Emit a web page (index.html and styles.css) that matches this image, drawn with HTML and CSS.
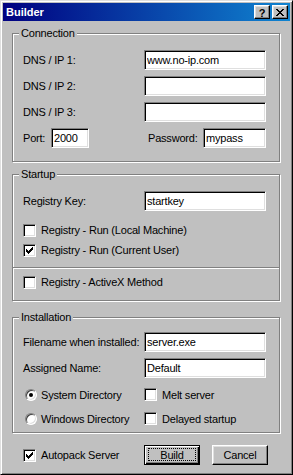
FILE: index.html
```html
<!DOCTYPE html>
<html lang="en">
<head>
    <meta charset="UTF-8">
    <title>Builder</title>
    <link rel="stylesheet" href="styles.css">
</head>
<body>
    <div class="window">
        <div class="titlebar">
            <span class="title">Builder</span>
            <span class="tbtn help">?</span>
            <span class="tbtn close">
                <svg width="8" height="7" viewBox="0 0 8 7" shape-rendering="crispEdges"><path d="M0 0h2v1H0zM6 0h2v1H6zM1 1h2v1H1zM5 1h2v1H5zM2 2h4v1H2zM3 3h2v1H3zM2 4h4v1H2zM1 5h2v1H1zM5 5h2v1H5zM0 6h2v1H0zM6 6h2v1H6z" fill="#000"/></svg>
            </span>
        </div>

        <div class="content">
            <!-- Connection -->
            <div class="group connection">
                <span class="group-title">Connection</span>
                <div class="field"><label>DNS / IP 1:</label><input class="edit" value="www.no-ip.com"></div>
                <div class="field"><label>DNS / IP 2:</label><input class="edit" value=""></div>
                <div class="field"><label>DNS / IP 3:</label><input class="edit" value=""></div>
                <div class="field">
                    <label class="port-label">Port:</label><input class="edit port" value="2000">
                    <label class="pass-label">Password:</label><input class="edit pass" value="mypass">
                </div>
            </div>

            <!-- Startup -->
            <div class="group startup">
                <span class="group-title">Startup</span>
                <div class="field"><label>Registry Key:</label><input class="edit" value="startkey"></div>
                <div class="check-row first"><span class="check"></span>Registry - Run (Local Machine)</div>
                <div class="check-row"><span class="check"><svg width="7" height="7" viewBox="0 0 7 7" shape-rendering="crispEdges"><path d="M0 2h1v3H0zM1 3h1v3H1zM2 4h1v3H2zM3 3h1v3H3zM4 2h1v3H4zM5 1h1v3H5zM6 0h1v3H6z" fill="#000"/></svg></span>Registry - Run (Current User)</div>
                <div class="divider"></div>
                <div class="check-row activex"><span class="check"></span>Registry - ActiveX Method</div>
            </div>

            <!-- Installation -->
            <div class="group installation">
                <span class="group-title">Installation</span>
                <div class="field"><label>Filename when installed:</label><input class="edit" value="server.exe"></div>
                <div class="field"><label>Assigned Name:</label><input class="edit" value="Default"></div>
                <div class="option-row first">
                    <div class="opt"><span class="radio on"></span>System Directory</div>
                    <div class="opt"><span class="check"></span>Melt server</div>
                </div>
                <div class="option-row">
                    <div class="opt"><span class="radio"></span>Windows Directory</div>
                    <div class="opt"><span class="check"></span>Delayed startup</div>
                </div>
            </div>

            <div class="bottom-row">
                <div class="opt autopack"><span class="check"><svg width="7" height="7" viewBox="0 0 7 7" shape-rendering="crispEdges"><path d="M0 2h1v3H0zM1 3h1v3H1zM2 4h1v3H2zM3 3h1v3H3zM4 2h1v3H4zM5 1h1v3H5zM6 0h1v3H6z" fill="#000"/></svg></span>Autopack Server</div>
                <button class="btn default"><span class="focus">Build</span></button>
                <button class="btn">Cancel</button>
            </div>
        </div>
    </div>
</body>
</html>
```

FILE: styles.css
```css
* { box-sizing: border-box; }

body {
    margin: 0;
    background: #c0c0c0;
    font-family: "Liberation Sans", Arial, sans-serif;
    font-size: 11px;
    letter-spacing: -0.2px;
    color: #000;
}

.window {
    width: 293px;
    height: 475px;
    border: 1px solid;
    border-color: #dfdfdf #000 #000 #dfdfdf;
    box-shadow: inset 1px 1px #fff, inset -1px -1px #808080;
    padding: 2px;
    background: #c0c0c0;
}

.titlebar {
    height: 18px;
    display: flex;
    align-items: center;
    padding: 0 2px 0 3px;
    background: linear-gradient(to right, #000080, #1084d0);
}
.title {
    flex: 1;
    color: #fff;
    font-weight: bold;
    font-size: 11px;
    letter-spacing: 0;
}
.tbtn {
    width: 16px;
    height: 14px;
    display: flex;
    align-items: center;
    justify-content: center;
    margin-left: 2px;
    background: #c0c0c0;
    border: 1px solid;
    border-color: #fff #000 #000 #fff;
    box-shadow: inset -1px -1px #808080, inset 1px 1px #dfdfdf;
}
.help {
    font-weight: bold;
    font-size: 11px;
    line-height: 12px;
    padding-top: 1px;
}

.content {
    padding: 12px 10px 0 9px;
}

.group {
    position: relative;
    display: flex;
    flex-direction: column;
    border: 1px solid #808080;
    box-shadow: inset 1px 1px #fff, 1px 1px #fff;
    padding: 16px 13px 13px 10px;
}
.group-title {
    position: absolute;
    top: -7px;
    left: 6px;
    line-height: 13px;
    padding: 0 2px;
    background: #c0c0c0;
}

.connection { gap: 6px; }
.startup { margin-top: 12px; padding-bottom: 8px; }
.installation { margin-top: 16px; padding-top: 14px; padding-bottom: 4px; gap: 6px; }

.field {
    display: flex;
    align-items: center;
    height: 20px;
    white-space: nowrap;
}
.field label { width: 121px; flex: none; }
.field .port-label { width: 28px; }
.field .pass-label { width: 55px; margin-left: 59px; }

.edit {
    width: 122px;
    height: 20px;
    flex: none;
    border: 1px solid;
    border-color: #808080 #fff #fff #808080;
    box-shadow: inset 1px 1px #000, inset -1px -1px #dfdfdf;
    padding: 0 2px;
    font: inherit;
    letter-spacing: inherit;
    color: #000;
    background: #fff;
    outline: none;
}
.edit.port { width: 38px; }
.edit.pass { width: 63px; }

.check {
    width: 13px;
    height: 13px;
    flex: none;
    display: flex;
    padding: 2px;
    border: 1px solid;
    border-color: #808080 #fff #fff #808080;
    box-shadow: inset 1px 1px #000, inset -1px -1px #dfdfdf;
    background: #fff;
    margin-right: 5px;
}

.radio {
    position: relative;
    width: 12px;
    height: 12px;
    flex: none;
    border-radius: 50%;
    border: 1px solid;
    border-color: #808080 #fff #fff #808080;
    box-shadow: inset 1px 1px #404040, inset -1px -1px #dfdfdf;
    background: #fff;
    margin: 0 4px 0 2px;
}
.radio.on::after {
    content: "";
    position: absolute;
    left: 3px;
    top: 3px;
    width: 4px;
    height: 4px;
    border-radius: 50%;
    background: #000;
}

.check-row {
    display: flex;
    align-items: center;
    height: 20px;
    white-space: nowrap;
}
.check-row.first { margin-top: 9px; }
.check-row.activex { margin-top: 3px; }

.divider {
    height: 2px;
    margin: 7px -13px 0 -10px;
    border-top: 1px solid #808080;
    border-bottom: 1px solid #fff;
}

.option-row {
    display: flex;
    height: 19px;
    margin-top: -1px;
    white-space: nowrap;
}
.option-row.first { margin-top: 1px; }
.opt {
    display: flex;
    align-items: center;
    white-space: nowrap;
}
.option-row .opt:first-child { width: 121px; }

.bottom-row {
    display: flex;
    align-items: center;
    height: 20px;
    margin-top: 12px;
    padding-left: 11px;
}
.autopack { width: 121px; }

.btn {
    width: 56px;
    height: 20px;
    padding: 0;
    font: inherit;
    letter-spacing: inherit;
    color: #000;
    background: #c0c0c0;
    border: 1px solid;
    border-color: #fff #000 #000 #fff;
    box-shadow: inset -1px -1px #808080, inset 1px 1px #dfdfdf;
    margin-right: 12px;
}
.btn.default {
    border-color: #000;
    box-shadow: inset 1px 1px #fff, inset -1px -1px #000, inset -2px -2px #808080;
    padding: 2px 3px 3px 3px;
}
.focus {
    display: flex;
    align-items: center;
    justify-content: center;
    height: 100%;
    border: 1px dotted #000;
}
```
